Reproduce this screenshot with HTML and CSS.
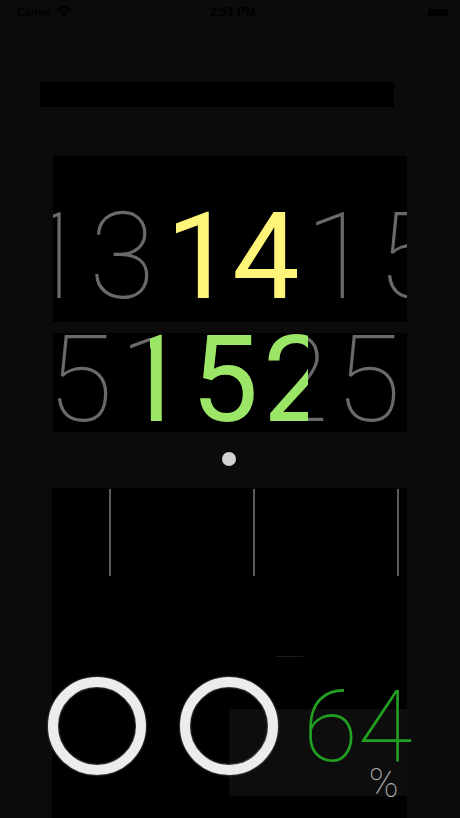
FILE: index.html
```html
<!DOCTYPE html>
<html>
<head>
<meta charset="utf-8">
<link rel="stylesheet" href="styles.css">
</head>
<body>
<div class="screen">
  <div class="status">
    <div class="st-left">
      <span class="carrier">Carrier</span>
      <svg class="wifi" width="16" height="12" viewBox="0 0 16 12">
        <path d="M8 11.5 L5.6 8.6 A3.6 3.6 0 0 1 10.4 8.6 Z" fill="#000"/>
        <path d="M3.6 6.4 A6.4 6.4 0 0 1 12.4 6.4" stroke="#000" stroke-width="1.8" fill="none"/>
        <path d="M1.2 3.8 A10 10 0 0 1 14.8 3.8" stroke="#000" stroke-width="1.8" fill="none"/>
      </svg>
    </div>
    <span class="time">2:51 PM</span>
    <div class="st-right"><span class="battery"></span></div>
  </div>

  <div class="topbar"></div>

  <div class="panel p1">
    <div class="digits">
      <span class="cell thin g-first">1</span>
      <span class="cell thin">3</span>
      <span class="cell bold yellow y1">1</span>
      <span class="cell bold yellow">4</span>
      <span class="cell thin">1</span>
      <span class="cell thin">5</span>
    </div>
  </div>

  <div class="panel p2">
    <div class="digits">
      <span class="cell thin">5</span>
      <span class="cell thin">1</span>
      <span class="cell thin">5</span>
      <span class="cell thin">2</span>
      <span class="cell thin">5</span>
    </div>
    <div class="window">
      <div class="gdigits">
        <span class="g1">1</span><span class="g5">5</span><span class="g2">2</span>
      </div>
    </div>
  </div>

  <div class="dotrow"><span class="dot"></span></div>

  <div class="panel p3">
    <div class="ticks">
      <span class="tick"></span>
      <span class="tick"></span>
      <span class="tick"></span>
    </div>
    <div class="dash"></div>
    <div class="meterbg"></div>
    <div class="bottom">
      <span class="ring"></span>
      <span class="ring"></span>
      <div class="pct">
        <span class="num">64</span>
        <span class="sign">%</span>
      </div>
    </div>
  </div>
</div>
</body>
</html>
```

FILE: styles.css
```css
html, body {
  margin: 0;
  padding: 0;
  background: #0b0b0b;
}
.screen {
  width: 460px;
  height: 818px;
  overflow: hidden;
  background: #0b0b0b;
  font-family: "Liberation Sans", Arial, sans-serif;
}
.status {
  height: 24px;
  display: flex;
  align-items: center;
  justify-content: space-between;
  padding: 0 12px 0 17px;
  color: #000;
  font-size: 12px;
}
.st-left { display: flex; align-items: center; gap: 5px; width: 100px; }
.carrier { font-size: 11px; }
.time { font-weight: bold; font-size: 12px; }
.st-right { width: 100px; display: flex; justify-content: flex-end; }
.battery { width: 20px; height: 7px; background: #000; display: block; }

.topbar {
  margin: 58px 0 0 40px;
  width: 354px;
  height: 25px;
  background: #000;
}
.panel {
  background: #000;
  position: relative;
  overflow: hidden;
}
.p1 {
  margin: 49px 0 0 53px;
  width: 354px;
  height: 166px;
}
.p2 {
  margin: 11px 0 0 53px;
  width: 354px;
  height: 99px;
}
.digits {
  display: flex;
  font-size: 120px;
}
.p1 .digits {
  margin-left: -39px;
  height: 166px;
  line-height: 166px;
  padding-top: 18px;
}
.p2 .digits {
  margin-left: -9px;
  line-height: 99px;
  margin-top: -2px;
}
.cell {
  flex: 0 0 72px;
  width: 72px;
  text-align: center;
}
.g-first { text-indent: 8px; }
.thin {
  font-family: Roboto, Inter, sans-serif;
  font-weight: 100;
  color: #6a6a6a;
}
.bold {
  font-family: Roboto, Inter, sans-serif;
  font-weight: 400;
}
.yellow { color: #fff47a; }
.y1 { text-indent: 8px; }

.window {
  position: absolute;
  left: 97px;
  top: 0;
  width: 158px;
  height: 99px;
  background: #000;
  overflow: hidden;
}
.gdigits {
  display: flex;
  font-family: Roboto, Inter, sans-serif;
  font-weight: 400;
  font-size: 120px;
  line-height: 99px;
  margin-top: -2px;
  color: #9be567;
}
.g1 { margin-left: -31px; width: 80px; flex: 0 0 80px; }
.g5 { margin-left: -8px; width: 68px; flex: 0 0 68px; }
.g2 { margin-left: 4px; }

.dotrow {
  height: 56px;
  display: flex;
  justify-content: center;
  align-items: center;
  padding-right: 2px;
}
.dot {
  width: 14px;
  height: 14px;
  border-radius: 50%;
  background: #d4d4d4;
  margin-top: -2px;
}

.p3 {
  margin: 0 0 0 52px;
  width: 355px;
  height: 330px;
  overflow: visible;
}
.ticks {
  display: flex;
  gap: 142px;
  padding: 1px 0 0 57px;
}
.tick {
  width: 2px;
  height: 87px;
  background: #5a5a5a;
}
.dash {
  margin: 80px 0 0 224px;
  width: 27px;
  height: 1px;
  background: #1c1c1c;
}
.meterbg {
  position: absolute;
  left: 177px;
  top: 221px;
  width: 178px;
  height: 87px;
  background: #0d0d0d;
}
.bottom {
  position: relative;
  display: flex;
  align-items: flex-start;
  margin: 20px 0 0 -4px;
}
.ring {
  flex: 0 0 98px;
  box-sizing: border-box;
  width: 98px;
  height: 98px;
  border: 10px solid #ececec;
  border-radius: 50%;
  box-shadow: 0 0 2px rgba(255,255,255,0.6), inset 0 0 2px rgba(255,255,255,0.6);
  margin-right: 34px;
}
.ring + .ring { margin-right: 25px; }
.pct {
  flex: 0 0 auto;
  display: flex;
  flex-direction: column;
  align-items: flex-end;
  font-family: Roboto, Inter, sans-serif;
  font-weight: 100;
}
.num {
  font-size: 100px;
  line-height: 80px;
  color: #22a022;
  margin-top: 10px;
}
.sign {
  font-size: 40px;
  line-height: 40px;
  color: #b0b0b0;
  margin-right: 14px;
  margin-top: -3px;
}
```
